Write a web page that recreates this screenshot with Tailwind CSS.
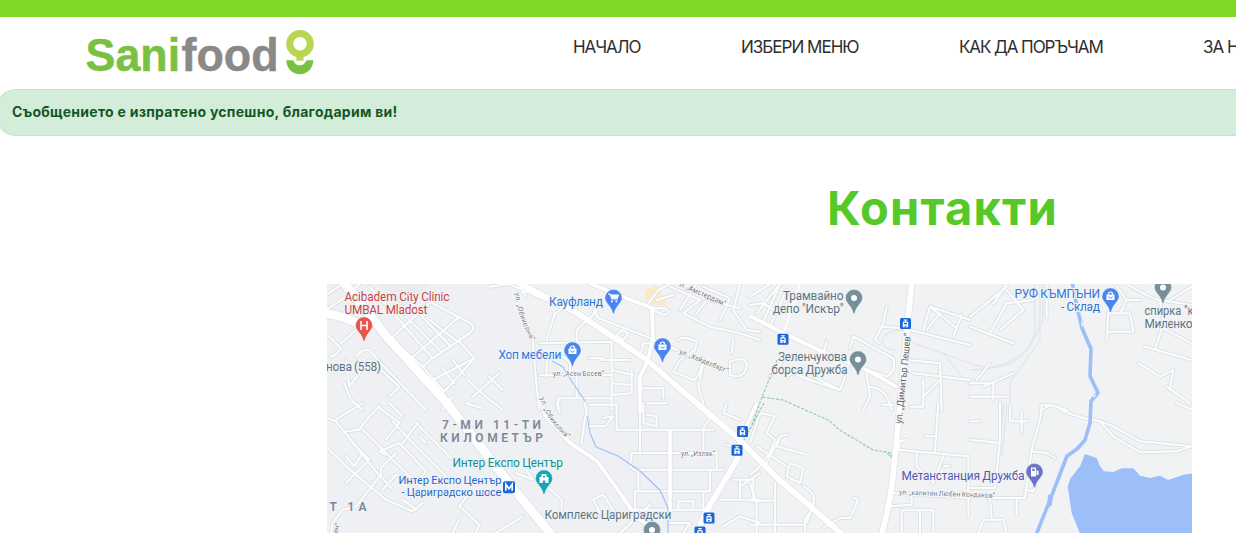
<!DOCTYPE html>
<html lang="bg">
<head>
<meta charset="utf-8">
<title>Sanifood – Контакти</title>
<script src="https://cdn.jsdelivr.net/npm/@tailwindcss/browser@4"></script>
</head>
<body class="w-[1236px] h-[533px] overflow-hidden bg-white font-['Inter','Open_Sans',sans-serif]">
<div class="h-[17px] bg-[#80d827]"></div>
<header class="flex h-[72px] w-full overflow-hidden pl-[84px]">
  <svg class="mt-2 h-[56px] w-[240px] shrink-0" viewBox="84 25 240 56" font-family="Liberation Sans" font-weight="700" font-size="46.500">
    <text x="85.600" y="71.300" fill="#7ac143" stroke="#7ac143" stroke-width=".5" textLength="94.500" lengthAdjust="spacingAndGlyphs">Sani</text>
    <text x="181.500" y="71.300" fill="#8a8987" stroke="#8a8987" stroke-width=".5" textLength="97" lengthAdjust="spacingAndGlyphs">food</text>
    <path d="M286.200 60.300h7a7 7.500 0 0 0 13.200 0h7C313 69 307 74.300 299.800 74.300S286.700 69 286.200 60.300z" fill="#7ac143"/>
    <circle cx="300" cy="43.800" r="10.300" fill="none" stroke="#b8d653" stroke-width="7"/>
    <path d="M296.300 54h7.200v6.700h-7.200z" fill="#b8d653"/>
  </svg>
  <nav class="ml-[249px] mt-[18px] flex shrink-0 gap-[100px] text-[17px] leading-6 text-[#2e2e2e] whitespace-nowrap">
    <a class="w-[68px] tracking-[-1.05px]">НАЧАЛО</a>
    <a class="w-[118px] tracking-[-0.98px]">ИЗБЕРИ МЕНЮ</a>
    <a class="w-[144px] tracking-[-1.1px]">КАК ДА ПОРЪЧАМ</a>
    <a class="tracking-[-1px]">ЗА НАС</a>
  </nav>
</header>
<div class="-ml-[4px] flex h-[47px] items-center rounded-l-[20px] border border-r-0 border-[#c3e6cb] bg-[#d4edda] pb-[2px] pl-[15px] text-[14px] font-bold tracking-[0.28px] text-[#155724]"><span class="whitespace-nowrap">Съобщението е изпратено успешно, благодарим ви!</span></div>
<h1 class="mt-[42px] ml-[827px] h-[60px] whitespace-nowrap text-[47px] font-bold leading-[60px] tracking-[1.15px] text-[#54c928]">Контакти</h1>
<svg class="ml-[327px] mt-[46px] block h-[249px] w-[865px]" viewBox="327 284 865 249" font-family="Roboto, sans-serif">
  <defs>
    <g id="minor" fill="none" stroke-linejoin="round" stroke-linecap="round">
      <path transform="translate(326 280) scale(.33333)" d="M0 45L50 12M0 90L60 50L100 12M130 20L180 75L320 235L430 160Q450 145 435 130L310 65M200 170L310 70M240 110L345 215M270 90L370 195M305 115L395 185M250 240L400 110M320 235L290 260L210 190M320 300L445 235L400 185M320 300L355 335L445 235M290 260L355 335M350 265L385 310M380 240L415 285M4 165L45 205Q30 225 15 230M45 190L100 140M60 240L70 320L130 240M90 230Q110 205 130 210L160 245L300 390M130 240L220 320L190 350M55 310L75 360L110 390M425 300L480 350L530 390M440 350L520 280M420 370L470 385M490 290L530 330M350 390L380 350M620 180L630 300L640 390M580 12L600 50M490 20L550 12L660 60"/>
      <path transform="translate(326 403) scale(.33333)" d="M4 45L30 55L150 205L200 260M30 50L110 0M60 85L100 80L130 40L160 10M110 80L290 260M4 135L60 190L180 290L260 325L290 300M110 150L85 190L60 160M165 215L90 310L50 320L20 360L15 390M165 220V195L210 150M180 155L160 145L220 120L300 205L270 240L210 215L170 260M230 120L275 60M200 55L270 130L390 250M270 60L380 170M155 10L220 60L180 110M60 240L130 170L80 120M190 0L230 40M400 310L460 365L450 390M400 310L430 270M380 390L400 350M510 390L590 340M570 210L620 230L600 200M280 100L300 120M230 290L270 320"/>
      <path transform="translate(540 280) scale(.33333)" d="M170 90Q160 110 190 120L320 170L410 210M325 70L355 30L390 12M350 60L400 45M335 85L375 85Q400 100 370 105L340 90M230 165L245 150L265 160L250 180ZM300 230L310 190L330 190M0 190L215 185M0 235L70 230L90 250V285M20 180L45 100L90 70M110 185V150L160 105L165 80M215 185V390M150 235H190M185 240H270M215 270L280 285M215 310L275 315M275 270V340L215 345M0 285H210M20 240V290M55 390V355H215M110 285V355M300 325H370V355M320 370H380M415 180Q430 165 470 185L465 210L420 240L400 275L460 300Q480 290 485 250M490 250L475 320L490 370M390 20L480 60L430 100L510 140L600 160L660 180M420 90L470 12M470 100L500 60L600 85M490 20L570 55L540 120M600 12L580 90L620 150L660 155M570 245Q620 225 620 260Q610 300 570 285ZM580 180L575 220"/>
      <path transform="translate(540 403) scale(.33333)" d="M150 5H230V80H520M135 0L145 70L195 70L220 40L190 45M300 0V145M275 150H530V200M275 150L270 190L280 200H550M295 205V265M285 320V265H510V205M285 320H500M490 265V320M310 0V60L350 70V40L320 35M490 140V75L510 45M160 290L190 275L225 330M160 290L180 330M240 390L330 305M285 320L290 345L240 390M390 360H450L430 390M415 320V295H460V320M540 290H660M580 230H640V290M600 230V290M600 250L660 210M560 0L550 30L600 50M560 125L600 140M125 120L135 40M20 250L65 290V320M550 370L600 340L660 360M50 0L60 30"/>
      <path transform="translate(750 280) scale(.33333)" d="M0 50L60 12M20 100L90 12M0 75L40 70L90 100M40 125L90 12M60 140L110 30M300 205L310 170L430 235Q440 270 410 290L300 250M190 290L270 330L285 290M220 220L230 185M390 190L375 180L400 130L410 80M400 140L450 145M350 280L360 350L340 390M355 320Q410 320 425 390M480 150L660 195M520 150L540 80L660 120M540 80L620 145M530 150L570 100M610 170L635 105M470 240L570 250L575 390M490 280L660 300M520 350L570 300M480 380H520V300M80 260L180 300L270 330M110 290L160 260M100 240L60 290"/>
      <path transform="translate(970 280) scale(.33333)" d="M0 110L110 20M70 70L110 12M0 140L130 190M110 30L160 90L90 150M60 160L110 70L190 60M230 110V12M0 310H70V360M20 300L60 250M0 350H110M40 320L130 280M410 180L415 100H480L490 155H410M440 20L470 60L450 100M470 12Q550 60 570 60L665 75M570 60L580 130L555 210M600 60L665 20M525 200L665 240M505 250L570 290L610 270M600 330L610 270M590 320L660 370M570 140L665 190M215 390L240 375L290 390M470 60H510"/>
      <path transform="translate(750 403) scale(.33333)" d="M0 120L30 30L75 40L50 90L75 110L60 150L20 200L0 215M110 95L90 100L80 130L170 155M20 130L110 190M120 180L160 195L150 240L110 220ZM85 110L50 180M160 250Q200 270 190 300L170 360M75 240V390M0 293H75M0 240L20 300V390M0 365H165M165 390V350L185 320M220 375L270 345H300L325 290L310 285M395 5H430M440 140L655 160M445 140L450 115L470 110M565 0L555 150M525 100H555M500 150V190L550 240L580 160M580 190H600M430 270L660 285M485 275V305L420 310M455 390V322H550V390M510 322V390M655 160V340"/>
      <path transform="translate(970 403) scale(.33333)" d="M90 0V110L75 255H0M0 110L90 120M0 55H30M120 10V55H170M155 25V90M215 5L260 10Q300 40 390 55L430 70L510 115L665 130M390 55L430 100L510 148L620 145L665 130M215 5L210 50L185 140L165 285H50M185 145L230 150L255 165M165 260L190 265L195 245M140 290V335M60 285L65 345M25 390L40 350H100L110 390M620 0L665 20"/>
    </g>
    <g id="medium" fill="none" stroke-linejoin="round">
      <path d="M582 280L623 297L652 308L653 337L648 360L640 377V412M750 316L777 330L823 352L867 370L897 387M541 400L545 415L570 443L597 461L620 493L637 518L650 526M670 430V512M757 403L740 440"/>
      <path d="M800 284L783 335" stroke-width="2"/>
    </g>
    <g id="major" fill="none" stroke-linejoin="round">
      <path d="M515 281L540 294L577 313L607 333L647 360L673 383L707 412L740 440L777 478L810 506L845 537"/>
      <path d="M912 280L907 330L900 405L892 486L887 513L881 537"/>
      <path d="M741 438L737 460L707 510L695 537"/>
    </g>
    <path id="highway" d="M322 313Q352 316 370 332M340 278L366 310L387 337L446 402L485 452L513 488L554 538" fill="none"/>
    <path id="pin" d="M0-8.500A8.500 8.500 0 0 0-8.500 0C-8.500 5-2 8-.8 15Q0 16.300 .8 15C2 8 8.500 5 8.500 0A8.500 8.500 0 0 0 0-8.500z"/>
    <g id="bag"><path d="M-4-1.500h8v5.500h-8z" fill="#fff"/><path d="M-2.200-1.500a2.200 2.500 0 0 1 4.400 0" fill="none" stroke="#fff" stroke-width="1.200"/><path d="M-1.800 .5a1.800 1.600 0 0 0 3.600 0" fill="none" stroke="#4a85ee" stroke-width=".9"/></g>
    <g id="tram"><rect x="-5.500" y="-5.500" width="11" height="11" rx="1.500" fill="#1a66dc"/><path d="M-2.700 3.800V-.8Q-2.700-2-1.500-2H1.500Q2.700-2 2.700-.8V3.800zM-1.800-4h3.600v1h-3.600zM-.5-3h1v1h-1z" fill="#fff"/><path d="M-1.500-.7h3v1.400h-3zM-1 2.300h2v1h-2z" fill="#1a66dc"/></g>
  </defs>
  <path d="M327 284H1192V533H327z" fill="#f0f2f4"/>
  <path d="M327 284H505L560 370L680 400L760 470L720 533H327z" fill="#eef0f3"/>
  <path d="M380 284H430L400 310z" fill="#e9ecf0"/>
  <path d="M644 291L656 285L668 306L648 304z" fill="#fbeac3"/>
  <g fill="none" stroke="#dfe2e5" stroke-width="1">
    <path d="M1040 284V340L1010 383V410M1035 284V333Q1023 367 990 368Q978 367 970 363L913 343M970 370Q1007 370 1030 347L1043 320V284M1007 403L1002 456M1004 403L998 456"/>
    <path d="M895 350Q884 350 882 340Q886 330 903 330M943 353L970 387"/>
  </g>
  <use href="#minor" stroke="#dfe2e5" stroke-width="12"/>
  <use href="#medium" stroke="#dfe2e6" stroke-width="5.400"/>
  <use href="#major" stroke="#e1e4e8" stroke-width="7.300"/>
  <use href="#highway" stroke="#dfe1e6" stroke-width="10.600"/>
  <use href="#minor" stroke="#fcfdfd" stroke-width="6"/>
  <use href="#medium" stroke="#fff" stroke-width="3.700"/>
  <use href="#major" stroke="#fff" stroke-width="5.600"/>
  <use href="#highway" stroke="#fff" stroke-width="8.800"/>
  <g fill="none" stroke="#9cbff9" stroke-linejoin="round">
    <path d="M1072 282L1077 307L1082 328L1091 349L1090 376L1098 393L1091 401L1090 423L1085 440L1077 449L1067 456L1050 500L1036 535" stroke-width="3.600"/>
    <path d="M587 416L590 433L596 447L618 456L640 471L660 490L668 508V533M552 361L563 367L573 383L585 401" stroke-width="1.100"/>
  </g>
  <path d="M1048 495L1053 494L1052 505L1047 509z" fill="#9cbff9"/>
  <path d="M1081 320l2.500 5l-2 2zM1093 396l4-2l-3 4z" fill="#f0f2f4"/>
  <path transform="translate(970 403) scale(.33333)" d="M345 153L380 165L390 190L402 205L430 207L455 196H490L510 218L540 225L570 218L595 231L640 215L668 211V392H330L305 330L293 250L302 225L330 190z" fill="#9cbff9"/>
  <path d="M777 360L762 397L783 400L830 421L838 429L873 450L891 453L891 457L885 451M762 397L750 430M764 403L744 440" fill="none" stroke="#8ccba4" stroke-width="1.100" stroke-dasharray="3 1.500"/>

  <g font-size="12" stroke="#f0f2f4" stroke-width="2.500" paint-order="stroke" stroke-linejoin="round">
    <g fill="#c9413e"><text x="344.500" y="301" textLength="105">Acibadem City Clinic</text><text x="344.500" y="314.300" textLength="83">UMBAL Mladost</text></g>
    <g fill="#2c77e0"><text x="549" y="306" textLength="54">Кауфланд</text><text x="498.500" y="358.500" textLength="63">Хоп мебели</text><text x="1014.500" y="297.800" textLength="85.500">РУФ КЪМПЪНИ</text><text x="1061" y="311.300" textLength="39">- Склад</text></g>
    <g fill="#5c7482"><text x="783" y="299.700" textLength="60.500">Трамвайно</text><text x="773" y="313" textLength="70.500">депо "Искър"</text><text x="778" y="361" textLength="69">Зеленчукова</text><text x="771.500" y="374" textLength="76">борса Дружба</text><text x="1144.500" y="315" textLength="49" lengthAdjust="spacingAndGlyphs">спирка "к</text><text x="1144.500" y="328.300" textLength="48">Миленко</text><text x="326" y="371" textLength="55">нова (558)</text><text x="544.500" y="518.500" textLength="127">Комплекс Цариградски</text></g>
    <g fill="#7c8698" font-weight="600"><text x="442" y="429" textLength="99">7-МИ 11-ТИ</text><text x="440" y="442.300" textLength="103">КИЛОМЕТЪР</text><text x="329.500" y="511.300" textLength="37">Т 1А</text></g>
    <text x="452.500" y="467.300" textLength="110.500" fill="#168c95">Интер Експо Център</text>
    <g fill="#2866cf" font-size="11.200"><text x="398.500" y="484.200" textLength="103">Интер Експо Център</text><text x="401.500" y="496.300" textLength="100">- Цариградско шосе</text></g>
    <text x="901.500" y="480.300" textLength="123" fill="#515bb5">Метанстанция Дружба</text>
  </g>
  <g font-size="7" fill="#777b80" stroke="#f5f6f8" stroke-width="2" paint-order="stroke" stroke-linejoin="round">
    <path id="s1" d="M515 293Q518 319 532 342" fill="none" stroke="none"/><text><textPath href="#s1" textLength="51">ул. „Обиколна“</textPath></text>
    <path id="s2" d="M540 398Q546 421 569 440" fill="none" stroke="none"/><text><textPath href="#s2" textLength="50">ул. „Обиколна“</textPath></text>
    <text x="553" y="376" textLength="51">ул. „Асен Босев“</text>
    <text transform="translate(679 353.500) rotate(22)" textLength="52">ул. „Хайделберг“</text>
    <text transform="translate(679 286) rotate(24)" font-size="7.500" textLength="50">л. „Амстердам“</text>
    <text transform="translate(901.500 424) rotate(-84)" font-size="9.500" fill="#63676d" textLength="91">ул. „Димитър Пешев“</text>
    <text x="681" y="455.500" textLength="34">ул. „Излак“</text>
    <text transform="translate(899 494.500) rotate(2)" textLength="96">ул. „капитан Любен Кондаков“</text>
    <text transform="translate(336 537) rotate(-72)">сен“</text>
  </g>

  <g stroke="#fff" stroke-opacity=".5" stroke-width=".6">
    <use href="#pin" x="364" y="325.500" fill="#e8554f"/>
    <g fill="#4a85ee"><use href="#pin" x="613.500" y="298"/><use href="#pin" x="572.500" y="350.500"/><use href="#pin" x="662.500" y="346.500"/><use href="#pin" x="1110.500" y="296.500"/></g>
    <g fill="#768f9b"><use href="#pin" x="854" y="298"/><use href="#pin" x="858" y="359.500"/><use href="#pin" x="1163" y="287.500"/><use href="#pin" x="652" y="530"/></g>
    <use href="#pin" x="544" y="478.500" fill="#16a5b2"/>
    <use href="#pin" x="1034.500" y="472" fill="#6a74c4"/>
  </g>
  <path d="M361 321v9M367 321v9M361 325.500h6" stroke="#fff" stroke-width="1.600"/>
  <path d="M608 294h2l2 5h5l1.500-4h-8" fill="none" stroke="#fff" stroke-width="1.200"/><path d="M611 295h7l-1 3.500h-5zM611 300.500h1.800v1.800h-1.800zM615.500 300.500h1.800v1.800h-1.800z" fill="#fff"/>
  <use href="#bag" x="572.500" y="350"/><use href="#bag" x="662.500" y="346"/><use href="#bag" x="1110.500" y="296"/>
  <g fill="#fff"><circle cx="854" cy="298" r="3"/><circle cx="858" cy="359.500" r="3"/><circle cx="1163" cy="287.500" r="3"/><circle cx="652" cy="530" r="3"/></g>
  <path d="M539.500 483v-6h2v-3h5v3h2v6h-3.300v-2.500h-2.400v2.500z" fill="#fff"/><path d="M543 476h2v1.500h-2z" fill="#16a5b2"/>
  <path d="M1031 476.500v-9h5v9zM1036.500 470l2 1v4h-2" fill="#fff"/><path d="M1032.300 468.700h2.400v2.300h-2.400z" fill="#6a74c4"/>
  <use href="#tram" x="783" y="339.300"/><use href="#tram" x="905.500" y="323.500"/><use href="#tram" x="742.500" y="431.500"/><use href="#tram" x="737" y="450.300"/><use href="#tram" x="709" y="518"/><use href="#tram" x="700" y="532"/>
  <rect x="503" y="481.200" width="12" height="12" rx="2" fill="#1a66dc"/><path d="M505.800 490.800v-6.500l3.200 4.500l3.200-4.500v6.500" fill="none" stroke="#fff" stroke-width="1.600"/>
</svg>
</body>
</html>
